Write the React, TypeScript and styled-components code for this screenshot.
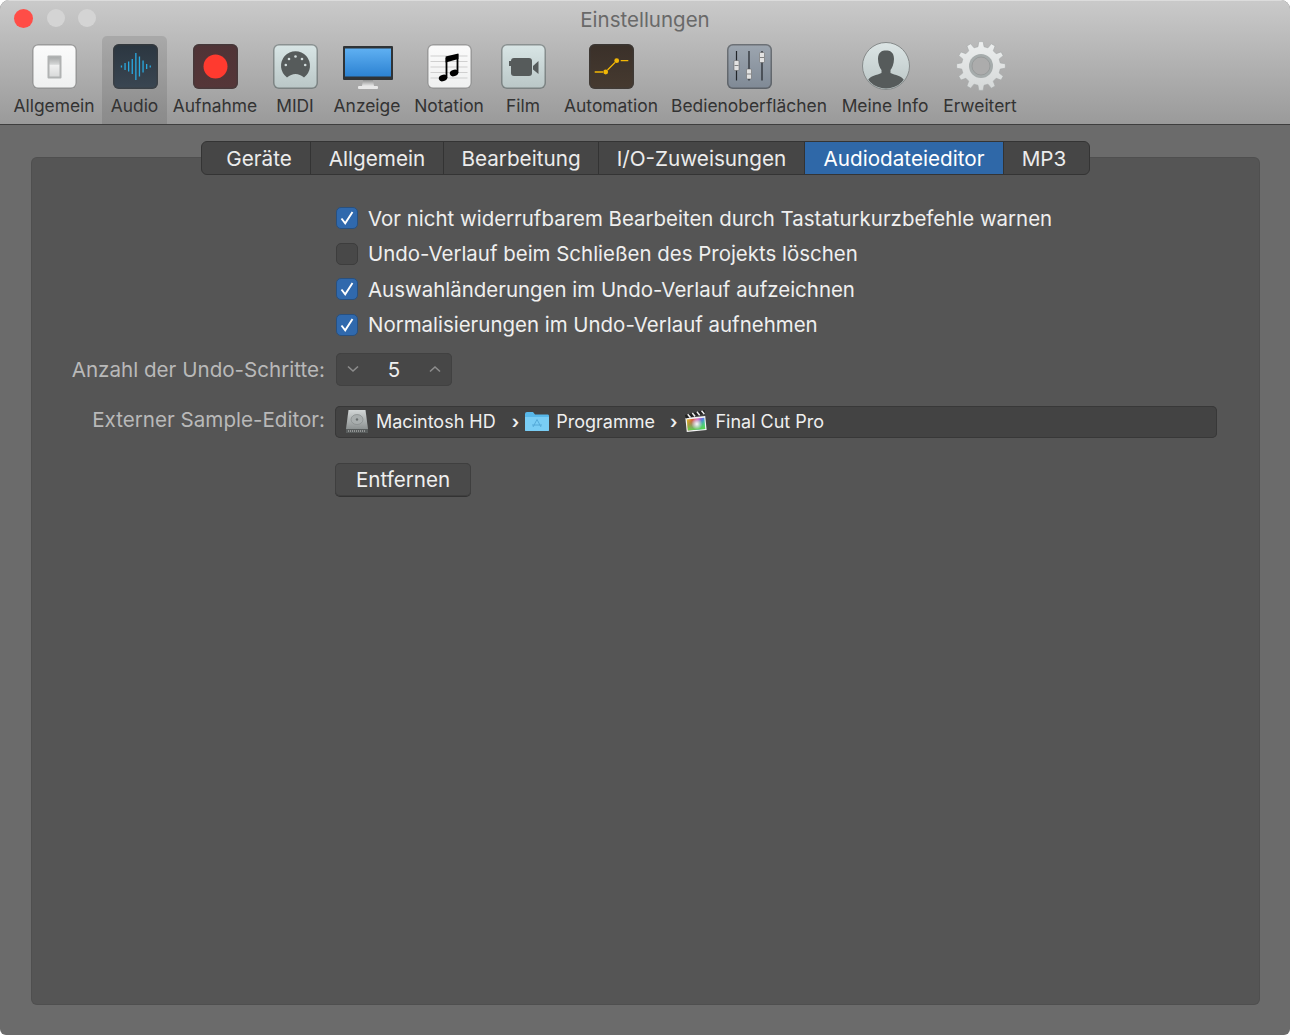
import styled, { createGlobalStyle } from "styled-components";
import type { ReactNode } from "react";

const GlobalStyle = createGlobalStyle`
  html, body {
    margin: 0;
    padding: 0;
    background: #fff;
  }
  body {
    font-family: Inter, "Liberation Sans", sans-serif;
    -webkit-font-smoothing: antialiased;
  }
`;

function SwitchIcon() {
  return (
    <svg width="45" height="45" viewBox="0 0 45 45">
      <defs>
        <linearGradient id="switchTop" x1="0" y1="0" x2="0" y2="1">
          <stop offset="0" stopColor="#a9abab" />
          <stop offset="1" stopColor="#d6d7d7" />
        </linearGradient>
        <linearGradient id="switchLow" x1="0" y1="0" x2="0" y2="1">
          <stop offset="0" stopColor="#f2f2f2" />
          <stop offset="1" stopColor="#d9dada" />
        </linearGradient>
      </defs>
      <rect x="15.5" y="11.5" width="14" height="23" rx="1" fill="#b0b2b2" />
      <rect x="17.5" y="13.5" width="10" height="7" fill="url(#switchTop)" />
      <rect x="17.5" y="20.5" width="10" height="12" fill="url(#switchLow)" />
    </svg>
  );
}

function WaveIcon() {
  const bars = [2, 7, 10, 15, 27, 20, 12, 5, 2];
  return (
    <svg width="45" height="45" viewBox="0 0 45 45">
      {bars.map((h, i) => (
        <rect key={i} x={7.8 + i * 3.6} y={22.5 - h / 2} width="1.3" height={h} fill="#2aa9e0" />
      ))}
    </svg>
  );
}

function RecordIcon() {
  return (
    <svg width="45" height="45" viewBox="0 0 45 45">
      <circle cx="22.5" cy="22.5" r="12" fill="#ff3a2f" />
    </svg>
  );
}

function MidiIcon() {
  return (
    <svg width="45" height="45" viewBox="0 0 45 45">
      <path
        d="M14 33.5 A14.5 14.5 0 1 1 31 33.5 Q27 30 22.5 30 Q18 30 14 33.5 Z"
        fill="#565b5b"
      />
      <circle cx="12.8" cy="21" r="1.3" fill="#d3dddd" />
      <circle cx="16" cy="15" r="1.3" fill="#d3dddd" />
      <circle cx="22.5" cy="12.5" r="1.3" fill="#d3dddd" />
      <circle cx="29" cy="15" r="1.3" fill="#d3dddd" />
      <circle cx="32.2" cy="21" r="1.3" fill="#d3dddd" />
    </svg>
  );
}

function DisplayIcon() {
  return (
    <svg width="52" height="46" viewBox="0 0 52 46">
      <defs>
        <linearGradient id="screenFill" x1="0" y1="0" x2="0" y2="1">
          <stop offset="0" stopColor="#5fb0f2" />
          <stop offset="1" stopColor="#2c82d2" />
        </linearGradient>
        <linearGradient id="standFill" x1="0" y1="0" x2="0" y2="1">
          <stop offset="0" stopColor="#8f9090" />
          <stop offset="1" stopColor="#e8e8e8" />
        </linearGradient>
      </defs>
      <rect x="1" y="3" width="50" height="34" rx="1" fill="#2f3336" />
      <rect x="3" y="5.5" width="46" height="28" fill="url(#screenFill)" />
      <path d="M21 37 H31 L32 43 H20 Z" fill="url(#standFill)" />
      <rect x="16" y="43" width="20" height="3" rx="1" fill="#e8e8e8" />
    </svg>
  );
}

function NotationIcon() {
  return (
    <svg width="45" height="45" viewBox="0 0 45 45">
      {[12, 17.5, 23, 28.5, 34].map((y) => (
        <line key={y} x1="3.5" x2="40.5" y1={y} y2={y} stroke="#cfcfcf" strokeWidth="1" />
      ))}
      <path d="M19.5 34 V14 M30.5 29 V10" fill="none" stroke="#000" strokeWidth="1.8" />
      <path d="M18.6 12.5 L31.4 9.5 V15 L18.6 18.5 Z" fill="#000" />
      <ellipse cx="16" cy="34" rx="4.3" ry="3.2" transform="rotate(-18 16 34)" fill="#000" />
      <ellipse cx="27" cy="29" rx="4.3" ry="3.2" transform="rotate(-18 27 29)" fill="#000" />
    </svg>
  );
}

function FilmIcon() {
  return (
    <svg width="45" height="45" viewBox="0 0 45 45">
      <rect x="10" y="14" width="21" height="18" rx="3" fill="#565b5b" />
      <rect x="8" y="17" width="2" height="5" fill="#565b5b" />
      <path d="M32 22 L37.5 17 V30 L32 25.5 Z" fill="#565b5b" />
    </svg>
  );
}

function AutomationIcon() {
  return (
    <svg width="45" height="45" viewBox="0 0 45 45">
      <path d="M5.7 28 H14 M18.5 26 L26 18.5 M31.7 16.7 H39.3" fill="none" stroke="#f2b705" strokeWidth="1.3" />
      <circle cx="16.7" cy="28" r="2.4" fill="#f2b705" />
      <circle cx="27.7" cy="16.7" r="2.4" fill="#f2b705" />
    </svg>
  );
}

function FaderIcon() {
  const faders = [
    { x: 9.5, y: 21.5 },
    { x: 22, y: 30 },
    { x: 35, y: 13.5 },
  ];
  return (
    <svg width="45" height="45" viewBox="0 0 45 45">
      {faders.map((f) => (
        <g key={f.x}>
          <line x1={f.x} x2={f.x} y1="7" y2="36.5" stroke="#22262a" strokeWidth="1.2" />
          <rect x={f.x - 2.5} y={f.y - 5} width="5" height="10" rx="1" fill="#e2e2e2" stroke="#5b5b5b" strokeWidth="0.5" />
          <line x1={f.x - 2} x2={f.x + 2} y1={f.y} y2={f.y} stroke="#6a6a6a" strokeWidth="0.8" />
        </g>
      ))}
    </svg>
  );
}

function PersonIcon() {
  return (
    <svg width="48" height="48" viewBox="0 0 48 48">
      <defs>
        <linearGradient id="personFill" x1="0" y1="0" x2="0" y2="1">
          <stop offset="0" stopColor="#dce5e5" />
          <stop offset="1" stopColor="#bac5c5" />
        </linearGradient>
        <clipPath id="personClip">
          <circle cx="24" cy="24" r="22.5" />
        </clipPath>
      </defs>
      <circle cx="24" cy="24" r="23.5" fill="url(#personFill)" stroke="#868a8a" strokeWidth="1" />
      <g clipPath="url(#personClip)" fill="#565b5b">
        <path d="M16 17 C16 10 20 8.5 24 8.5 C28 8.5 32 10 32 17 C32 22 30 26 28.5 28 V31 C33 33 40 34 42 38 V48 H6 V38 C8 34 15 33 19.5 31 V28 C18 26 16 22 16 17 Z" />
      </g>
    </svg>
  );
}

function gearPath(cx: number, cy: number, inner: number, outer: number, teeth: number) {
  const step = (Math.PI * 2) / teeth;
  const points: string[] = [];
  for (let i = 0; i < teeth; i++) {
    const a = i * step - Math.PI / 2;
    const spots: [number, number][] = [
      [a - step * 0.3, inner],
      [a - step * 0.17, outer],
      [a + step * 0.17, outer],
      [a + step * 0.3, inner],
    ];
    spots.forEach(([t, r]) => {
      points.push(`${(cx + Math.cos(t) * r).toFixed(2)} ${(cy + Math.sin(t) * r).toFixed(2)}`);
    });
  }
  return `M${points.join(" L")} Z`;
}

function GearIcon() {
  return (
    <svg width="50" height="50" viewBox="0 0 50 50">
      <defs>
        <linearGradient id="gearFill" x1="0" y1="0" x2="0" y2="1">
          <stop offset="0" stopColor="#eceeee" />
          <stop offset="1" stopColor="#d5d8d8" />
        </linearGradient>
      </defs>
      <path d={gearPath(25, 25, 19.5, 24.5, 12)} fill="url(#gearFill)" stroke="#a5a8a8" strokeWidth="0.6" />
      <circle cx="25" cy="25" r="12" fill="#a6acac" />
      <circle cx="25" cy="25" r="9" fill="#acacac" stroke="#868a8a" strokeWidth="0.5" />
    </svg>
  );
}

function DiskIcon() {
  return (
    <svg width="22" height="25" viewBox="0 0 22 25">
      <defs>
        <linearGradient id="diskFill" x1="0" y1="0" x2="0" y2="1">
          <stop offset="0" stopColor="#d2d6d6" />
          <stop offset="1" stopColor="#8d9292" />
        </linearGradient>
      </defs>
      <path d="M2.5 1 H19.5 L22 20 H0 Z" fill="url(#diskFill)" />
      <ellipse cx="11" cy="10.5" rx="6" ry="5" fill="#a9aeae" stroke="#7f8484" strokeWidth="0.6" />
      <circle cx="11" cy="10.5" r="1.2" fill="#6a6f6f" />
      <rect x="0" y="20" width="22" height="4" fill="#585c5c" />
      <line x1="2" x2="20" y1="22" y2="22" stroke="#c9c9c9" strokeDasharray="1 1" />
    </svg>
  );
}

function FolderIcon() {
  return (
    <svg width="26" height="21" viewBox="0 0 26 21">
      <path d="M1 3 Q1 1 3 1 H9 L11 3.5 H24 Q25 3.5 25 5 V19 Q25 20 24 20 H2 Q1 20 1 19 Z" fill="#58b8ea" />
      <path d="M1 6 H25 V19 Q25 20 24 20 H2 Q1 20 1 19 Z" fill="#79cdf5" />
      <path d="M13 8.5 L9 16 M13 8.5 L17 16 M8 14 H18" stroke="#50a6d6" strokeWidth="0.9" fill="none" />
    </svg>
  );
}

function ClapperIcon() {
  return (
    <svg width="24" height="24" viewBox="0 0 26 24" preserveAspectRatio="none">
      <defs>
        <linearGradient id="rainbowFill" x1="0" y1="0" x2="1" y2="0.4">
          <stop offset="0" stopColor="#f7d71f" />
          <stop offset="0.3" stopColor="#f2533a" />
          <stop offset="0.55" stopColor="#d63fd0" />
          <stop offset="0.8" stopColor="#4a7cf0" />
          <stop offset="1" stopColor="#35d0c0" />
        </linearGradient>
        <linearGradient id="rainbowLower" x1="0" y1="1" x2="0" y2="0">
          <stop offset="0" stopColor="#5fd23f" />
          <stop offset="1" stopColor="#5fd23f" stopOpacity="0" />
        </linearGradient>
        <radialGradient id="rainbowCore">
          <stop offset="0" stopColor="#fff" stopOpacity="0.95" />
          <stop offset="1" stopColor="#fff" stopOpacity="0" />
        </radialGradient>
      </defs>
      <path d="M1.5 9 L23 7 L24.5 21 L3 23 Z" fill="#f4f4f4" />
      <path d="M3 10.5 L22 8.8 L23 20 L4.2 21.6 Z" fill="url(#rainbowFill)" />
      <path d="M3 10.5 L22 8.8 L23 20 L4.2 21.6 Z" fill="url(#rainbowLower)" />
      <circle cx="14" cy="15" r="6" fill="url(#rainbowCore)" />
      <path d="M1 6 L22 1 L23 4.5 L2 9.5 Z" fill="#222" />
      <path d="M4 5.3 L7 8.6 M9 4 L12 7.4 M14 2.8 L17 6.2 M19 1.7 L22 5" stroke="#eee" strokeWidth="1.6" />
    </svg>
  );
}

const toolbarItems: {
  label: string;
  width: number;
  icon: ReactNode;
  tile?: "white" | "navy" | "maroon" | "mist" | "umber" | "slate";
  active?: boolean;
}[] = [
  { label: "Allgemein", width: 96, icon: <SwitchIcon />, tile: "white" },
  { label: "Audio", width: 65, icon: <WaveIcon />, tile: "navy", active: true },
  { label: "Aufnahme", width: 96, icon: <RecordIcon />, tile: "maroon" },
  { label: "MIDI", width: 64, icon: <MidiIcon />, tile: "mist" },
  { label: "Anzeige", width: 80, icon: <DisplayIcon /> },
  { label: "Notation", width: 84, icon: <NotationIcon />, tile: "white" },
  { label: "Film", width: 64, icon: <FilmIcon />, tile: "mist" },
  { label: "Automation", width: 112, icon: <AutomationIcon />, tile: "umber" },
  { label: "Bedienoberflächen", width: 164, icon: <FaderIcon />, tile: "slate" },
  { label: "Meine Info", width: 108, icon: <PersonIcon /> },
  { label: "Erweitert", width: 82, icon: <GearIcon /> },
];

const tabs = [
  { label: "Geräte", width: 109 },
  { label: "Allgemein", width: 133 },
  { label: "Bearbeitung", width: 155 },
  { label: "I/O-Zuweisungen", width: 206 },
  { label: "Audiodateieditor", width: 199, selected: true },
  { label: "MP3", width: 85 },
];

const checks = [
  { label: "Vor nicht widerrufbarem Bearbeiten durch Tastaturkurzbefehle warnen", checked: true },
  { label: "Undo-Verlauf beim Schließen des Projekts löschen", checked: false },
  { label: "Auswahländerungen im Undo-Verlauf aufzeichnen", checked: true },
  { label: "Normalisierungen im Undo-Verlauf aufnehmen", checked: true },
];

export default function App() {
  return (
    <>
      <GlobalStyle />
      <Window>
        <TitleBar>
          <TopRow>
            <Lights>
              <Light $color="#ff4d47" $size={19} />
              <Light $color="#d4d4d4" $size={18} />
              <Light $color="#d4d4d4" $size={18} />
            </Lights>
            <Title>Einstellungen</Title>
          </TopRow>
          <Toolbar>
            {toolbarItems.map((item) => (
              <ToolItem key={item.label} $width={item.width} $active={item.active}>
                <IconSlot>{item.tile ? <Tile $kind={item.tile}>{item.icon}</Tile> : item.icon}</IconSlot>
                <ToolLabel>{item.label}</ToolLabel>
              </ToolItem>
            ))}
          </Toolbar>
        </TitleBar>
        <Content>
          <Panel>
            <TabStrip>
              {tabs.map((tab) => (
                <Tab key={tab.label} $width={tab.width} $selected={tab.selected}>
                  {tab.label}
                </Tab>
              ))}
            </TabStrip>
            <Form>
              <CheckList>
                {checks.map((c) => (
                  <CheckRow key={c.label}>
                    <CheckBox $checked={c.checked}>
                      {c.checked && (
                        <svg width="14" height="14" viewBox="0 0 14 14">
                          <path d="M1.5 7.5 L5.2 12.3 L12.5 1" fill="none" stroke="#fff" strokeWidth="1.9" />
                        </svg>
                      )}
                    </CheckBox>
                    {c.label}
                  </CheckRow>
                ))}
              </CheckList>
              <FieldRow $height={33} $top={14}>
                <FieldLabel>Anzahl der Undo-Schritte:</FieldLabel>
                <Stepper>
                  <svg width="12" height="8" viewBox="0 0 12 8">
                    <path d="M1 1.5 L6 6 L11 1.5" fill="none" stroke="#8d8d8d" strokeWidth="1.6" />
                  </svg>
                  <StepperValue>5</StepperValue>
                  <svg width="12" height="8" viewBox="0 0 12 8">
                    <path d="M1 6.5 L6 2 L11 6.5" fill="none" stroke="#8d8d8d" strokeWidth="1.6" />
                  </svg>
                </Stepper>
              </FieldRow>
              <FieldRow $height={33} $top={20}>
                <FieldLabel $lift={6}>Externer Sample-Editor:</FieldLabel>
                <PathBar>
                  <DiskIcon />
                  <PathText $gap={8}>Macintosh HD</PathText>
                  <PathChevron $left={16} $right={5}>›</PathChevron>
                  <FolderIcon />
                  <PathText $gap={6}>Programme</PathText>
                  <PathChevron $left={15} $right={7}>›</PathChevron>
                  <ClapperIcon />
                  <PathText $gap={7}>Final Cut Pro</PathText>
                </PathBar>
              </FieldRow>
              <FieldRow $height={33} $top={24}>
                <span />
                <PushButton>Entfernen</PushButton>
              </FieldRow>
            </Form>
          </Panel>
        </Content>
      </Window>
    </>
  );
}

const Window = styled.div`
  width: 1290px;
  height: 1035px;
  display: flex;
  flex-direction: column;
  overflow: hidden;
  border-radius: 9px 9px 6px 6px;
  background: #6b6b6b;
`;

const TitleBar = styled.header`
  height: 124px;
  flex: none;
  display: flex;
  flex-direction: column;
  box-sizing: content-box;
  background: linear-gradient(#cacaca, #9a9a9a);
  border-bottom: 1px solid #3e3e3e;
  box-shadow: inset 0 1px 0 rgba(255, 255, 255, 0.35);
`;

const TopRow = styled.div`
  position: relative;
  height: 36px;
  flex: none;
  display: flex;
  align-items: center;
  justify-content: center;
`;

const Lights = styled.div`
  position: absolute;
  left: 14px;
  top: 8px;
  height: 20px;
  display: flex;
  align-items: center;
  gap: 13.5px;
`;

const Light = styled.span<{ $color: string; $size: number }>`
  width: ${(p) => p.$size}px;
  height: ${(p) => p.$size}px;
  border-radius: 50%;
  background: ${(p) => p.$color};
`;

const Title = styled.div`
  font-size: 20.5px;
  color: #696969;
  padding-top: 2px;
`;

const Toolbar = styled.nav`
  flex: 1;
  display: flex;
  padding-left: 6px;
`;

const ToolItem = styled.div<{ $width: number; $active?: boolean }>`
  width: ${(p) => p.$width}px;
  flex: none;
  display: flex;
  flex-direction: column;
  align-items: center;
  border-radius: 5px 5px 0 0;
  background: ${(p) => (p.$active ? "rgba(0, 0, 0, 0.1)" : "transparent")};
`;

const IconSlot = styled.div`
  height: 60px;
  flex: none;
  padding-left: 1px;
  display: flex;
  align-items: center;
  justify-content: center;
`;

const tileFills = {
  white: "linear-gradient(#fbfbfb, #eff0f0)",
  navy: "linear-gradient(#2b3640, #3a4652)",
  maroon: "linear-gradient(#4f3336, #553638)",
  mist: "linear-gradient(#d9e6e6, #b9c6c6)",
  umber: "linear-gradient(#3a3029, #463a30)",
  slate: "linear-gradient(#9da6b0, #7f8995)",
};

const Tile = styled.div<{ $kind: keyof typeof tileFills }>`
  width: 45px;
  height: 45px;
  display: flex;
  border-radius: 6px;
  box-shadow: inset 0 0 0 1.5px rgba(60, 60, 60, 0.5);
  background: ${(p) => tileFills[p.$kind]};
`;

const ToolLabel = styled.div`
  font-size: 17.4px;
  line-height: 20px;
  color: #333333;
  white-space: nowrap;
`;

const Content = styled.main`
  flex: 1;
  display: flex;
  padding: 32px 30px 30px 31px;
`;

const Panel = styled.section`
  flex: 1;
  display: flex;
  flex-direction: column;
  border-radius: 6px;
  background: #555555;
  box-shadow: inset 0 0 0 1px rgba(0, 0, 0, 0.07);
`;

const TabStrip = styled.div`
  align-self: center;
  display: flex;
  margin-top: -16px;
  overflow: hidden;
  border: 1px solid #343434;
  border-radius: 6px;
  background: #464646;
`;

const Tab = styled.div<{ $width: number; $selected?: boolean }>`
  width: ${(p) => p.$width}px;
  height: 32px;
  box-sizing: border-box;
  display: flex;
  align-items: center;
  justify-content: center;
  font-size: 20.7px;
  white-space: nowrap;
  color: ${(p) => (p.$selected ? "#fff" : "#ececec")};
  background: ${(p) => (p.$selected ? "#2f68a8" : "transparent")};
  border-right: 1px solid #333333;

  &:first-child {
    padding-left: 6px;
  }

  &:last-child {
    border-right: none;
    padding-right: 5px;
  }
`;

const Form = styled.div`
  padding-top: 29px;
  display: flex;
  flex-direction: column;
`;

const CheckList = styled.div`
  margin-left: 305px;
  display: flex;
  flex-direction: column;
  gap: 7.5px;
`;

const CheckRow = styled.label`
  height: 28px;
  display: flex;
  align-items: center;
  gap: 10px;
  font-size: 20.45px;
  color: #efefef;
  white-space: nowrap;
`;

const CheckBox = styled.span<{ $checked: boolean }>`
  width: 22px;
  height: 22px;
  flex: none;
  box-sizing: border-box;
  display: flex;
  align-items: center;
  justify-content: center;
  border-radius: 5px;
  border: 1px solid ${(p) => (p.$checked ? "#28507f" : "#3d3d3d")};
  background: ${(p) => (p.$checked ? "#3069ad" : "#484848")};
`;

const FieldRow = styled.div<{ $height: number; $top: number }>`
  height: ${(p) => p.$height}px;
  margin-top: ${(p) => p.$top}px;
  display: grid;
  grid-template-columns: 294px 1fr;
  column-gap: 10px;
  align-items: center;
  padding-right: 43px;
`;

const FieldLabel = styled.div<{ $lift?: number }>`
  padding-bottom: ${(p) => p.$lift ?? 0}px;
  text-align: right;
  font-size: 20.6px;
  color: #b9b9b9;
  white-space: nowrap;
`;

const Stepper = styled.div`
  width: 116px;
  height: 33px;
  margin-left: 1px;
  box-sizing: border-box;
  padding: 0 11px;
  display: flex;
  align-items: center;
  justify-content: space-between;
  border-radius: 5px;
  background: #474747;
  box-shadow: inset 0 0 0 1px #414141;
`;

const StepperValue = styled.span`
  font-size: 20.5px;
  color: #efefef;
`;

const PathBar = styled.div`
  height: 32px;
  box-sizing: border-box;
  padding: 0 11px 2px;
  display: flex;
  align-items: center;
  border-radius: 5px;
  background: #434343;
  box-shadow: inset 0 0 0 1px #383838;
`;

const PathText = styled.span<{ $gap: number }>`
  margin-left: ${(p) => p.$gap}px;
  font-size: 18px;
  color: #efefef;
  white-space: nowrap;
`;

const PathChevron = styled.span<{ $left: number; $right: number }>`
  margin: 0 ${(p) => p.$right}px 0 ${(p) => p.$left}px;
  font-size: 18px;
  font-weight: 600;
  color: #efefef;
`;

const PushButton = styled.div`
  width: 136px;
  height: 33px;
  box-sizing: border-box;
  display: flex;
  align-items: center;
  justify-content: center;
  font-size: 20.6px;
  color: #efefef;
  border-radius: 5px;
  background: #4a4a4a;
  box-shadow: inset 0 0 0 1px #3f3f3f, 0 1px 0 #333333;
`;
